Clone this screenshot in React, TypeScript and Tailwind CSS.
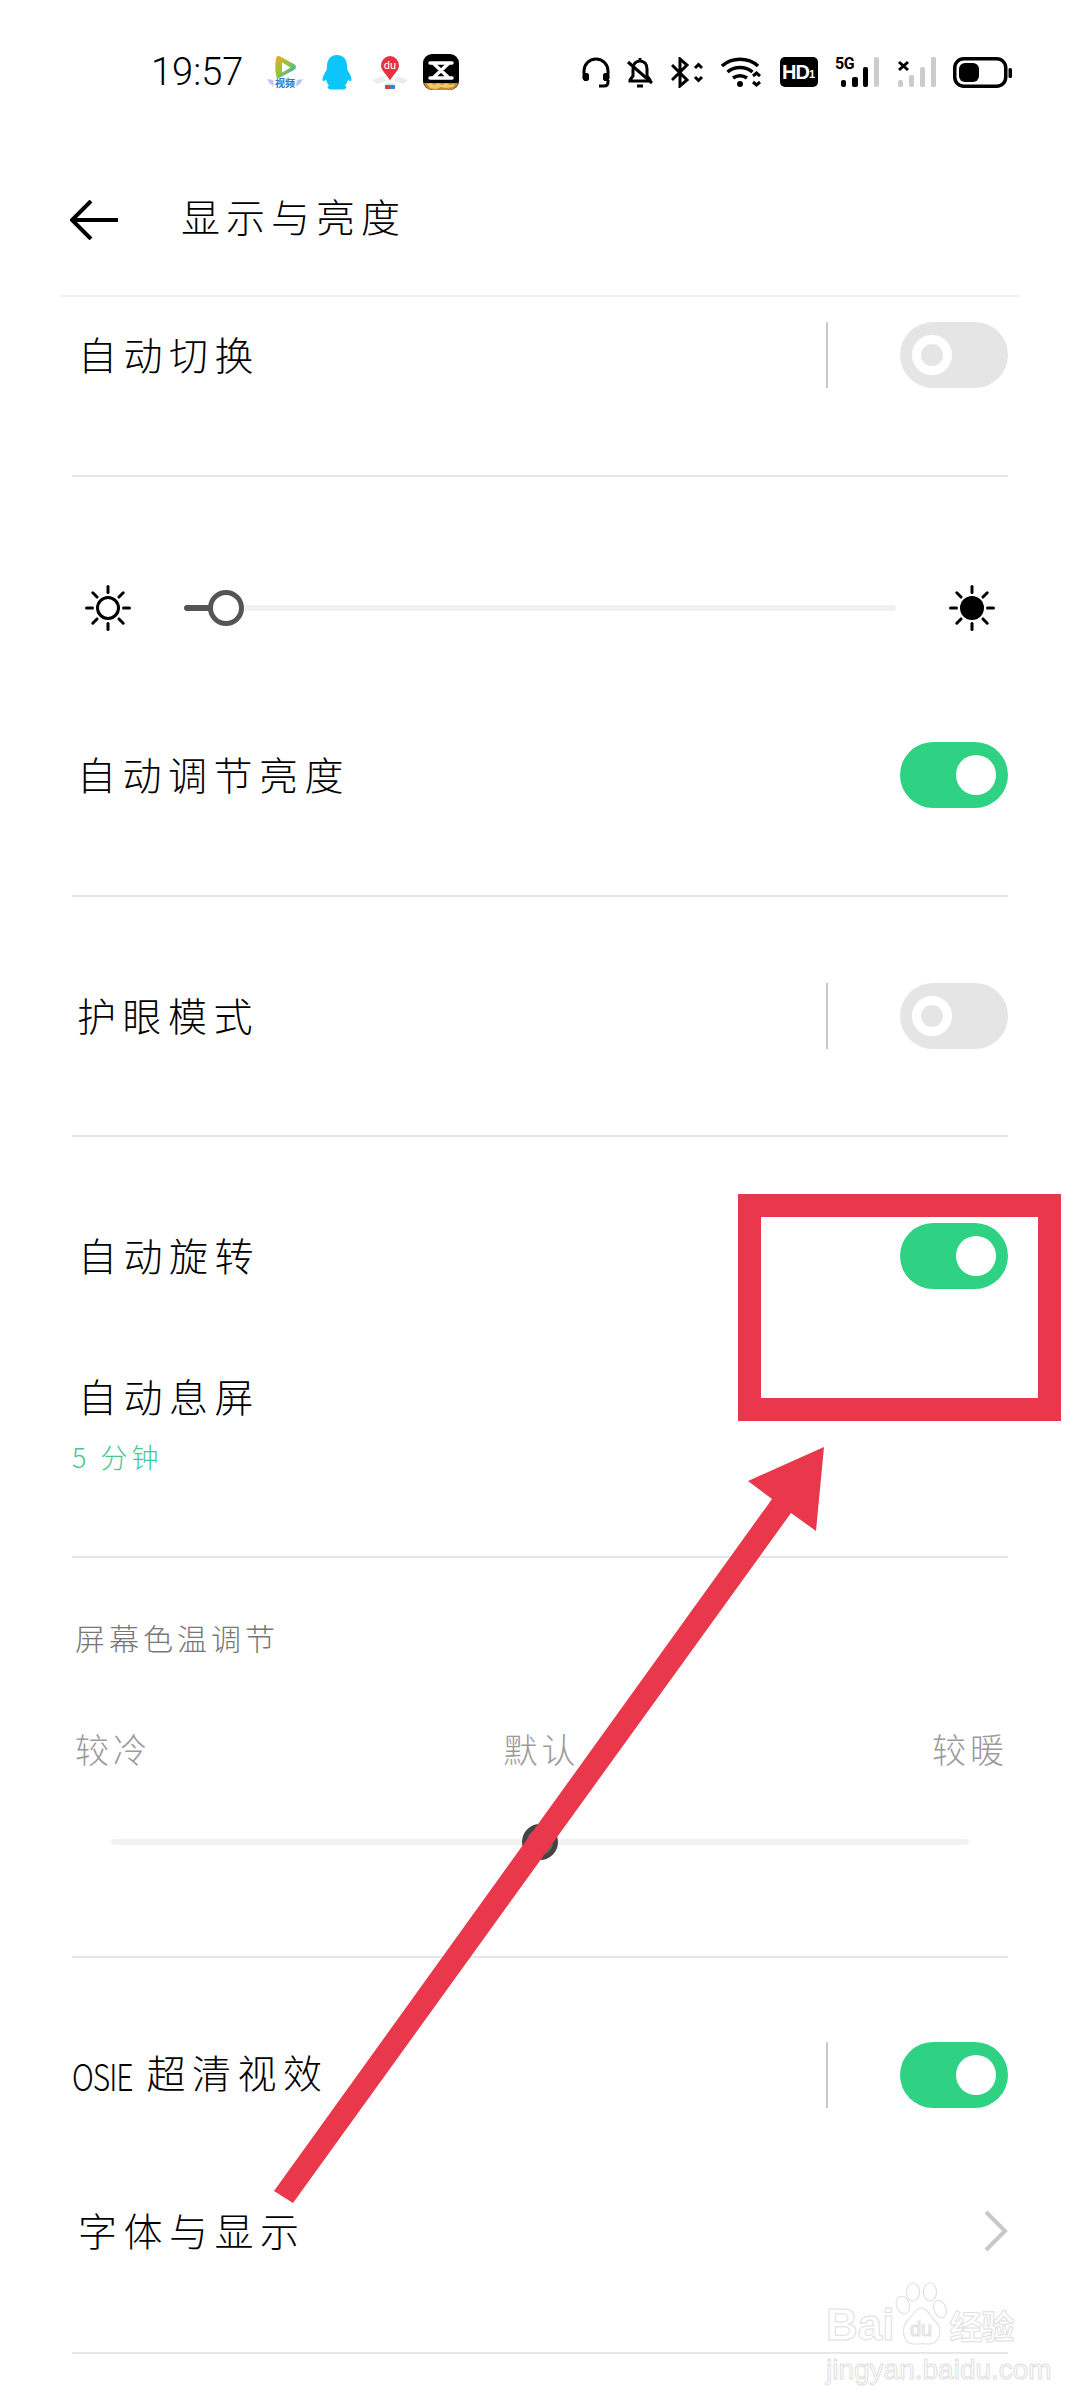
import type { ReactNode } from "react";

const labelClass = "font-['Noto_Sans_CJK_SC','Noto_Sans',sans-serif] text-[39px] leading-[56px] font-light tracking-[6.5px] text-black pb-[5px]";

function Toggle({ on }: { on: boolean }) {
  if (on) {
    return (
      <div className="flex h-[66px] w-[108px] items-center justify-end rounded-full bg-[#2fd283] pr-[12px]">
        <div className="size-[40px] rounded-full bg-white"></div>
      </div>
    );
  }
  return (
    <div className="flex h-[66px] w-[108px] items-center rounded-full bg-[#e5e5e5] pl-[12px]">
      <div className="size-[40px] rounded-full border-[9px] border-white"></div>
    </div>
  );
}

function Row({ label, labelClassName = "ml-[5px]", right }: { label: ReactNode; labelClassName?: string; right?: ReactNode }) {
  return (
    <div className="flex h-[116px] items-center justify-between">
      <span className={`${labelClass} ${labelClassName}`}>{label}</span>
      {right}
    </div>
  );
}

function DividedToggle({ on }: { on: boolean }) {
  return (
    <div className="flex items-center gap-[72px]">
      <div className="h-[66px] w-[2px] bg-[#c8c8c8]"></div>
      <Toggle on={on} />
    </div>
  );
}

function Sun({ filled }: { filled?: boolean }) {
  const rays = [0, 45, 90, 135, 180, 225, 270, 315];
  return (
    <svg width="46" height="46" viewBox="0 0 46 46" className="shrink-0">
      {rays.map((r) => (
        <line key={r} x1="23" y1="1.5" x2="23" y2="7.5" stroke="#000" strokeWidth="3" strokeLinecap="round" transform={`rotate(${r} 23 23)`} />
      ))}
      {filled ? (
        <circle cx="23" cy="23" r="12" fill="#000" />
      ) : (
        <circle cx="23" cy="23" r="10.5" fill="none" stroke="#000" strokeWidth="3" />
      )}
    </svg>
  );
}

function TencentVideo() {
  return (
    <svg width="36" height="36" viewBox="0 0 36 36">
      <defs>
        <linearGradient id="tv" x1="0" y1="0" x2="1" y2="1">
          <stop offset="0" stopColor="#f6a623" />
          <stop offset="0.5" stopColor="#8ac640" />
          <stop offset="1" stopColor="#1ea7e8" />
        </linearGradient>
      </defs>
      <path d="M9 5c0-2.500 2-3.500 4-2.500l14 7.500c2.500 1.500 2.500 4.500 0 6l-14 7.500c-2 1-4 0-4-2.500-1-5-1-11 0-16z" fill="url(#tv)" />
      <path d="M15 8.500l8.500 5-8.500 5z" fill="#fff" />
      <path d="M0 25l6 1 1 6-4-2zM36 25l-6 1-1 6 4-2z" fill="#b7c9ef" />
      <text x="18" y="33" textAnchor="middle" fontSize="10" fontWeight="700" fill="#2f6fd6" fontFamily="Noto Sans CJK SC, sans-serif">视频</text>
    </svg>
  );
}

function QQ() {
  return (
    <svg width="30" height="36" viewBox="0 0 30 36">
      <path d="M15 1c7 0 10 5 10 11 0 2 0 3 1 5 2 3 3.500 6 3.500 8.500 0 2-1.500 2-3.500 0-.5 3-2 5-3 6 2 1 2 3-1 4H8c-3-1-3-3-1-4-1-1-2.500-3-3-6-2 2-3.500 2-3.500 0 0-2.500 1.500-5.500 3.500-8.500 1-2 1-3 1-5C5 6 8 1 15 1z" fill="#0cc5fb" />
    </svg>
  );
}

function DuMap() {
  return (
    <svg width="36" height="36" viewBox="0 0 36 36">
      <path d="M0 26l11-4 3 5-9 3zM36 26l-11-4-3 5 9 3z" fill="#ececec" />
      <path d="M18 2a9.500 9.500 0 0 1 9 9.500c0 5-5 8-9 15-4-7-9-10-9-15A9.500 9.500 0 0 1 18 2z" fill="#e8323c" />
      <path d="M14.500 29h3.500v6h-5zM18 29h3.500l1.500 6h-5z" fill="#dfe6f2" />
      <rect x="13" y="31" width="5" height="4" fill="#d4414a" />
      <rect x="18" y="31" width="5" height="4" fill="#3f7fd6" />
      <text x="18" y="15" textAnchor="middle" fontSize="11" fill="#fff" fontFamily="Roboto, sans-serif">du</text>
    </svg>
  );
}

function CapCut() {
  return (
    <svg width="36" height="36" viewBox="0 0 36 36">
      <rect width="36" height="36" rx="9" fill="#000" />
      <path d="M1 29h34c-1 4-4 7-8 7H9c-4 0-7-3-8-7z" fill="#c98a2b" />
      <path d="M4 30l4-1 3 2 4-2 4 2 4-2 4 2 5-1-2 3-8 1-4-1-5 2-6-1z" fill="#f1c76a" />
      <path d="M7 9h22M7 24h22M10 9l16 15M26 9L10 24" stroke="#fff" strokeWidth="3.500" strokeLinecap="round" fill="none" />
    </svg>
  );
}

function Headset() {
  return (
    <svg width="28" height="31" viewBox="0 0 28 31" fill="none" stroke="#000" strokeWidth="3">
      <path d="M2 22V14a12 12 0 0 1 24 0v8" />
      <rect x="1.500" y="16.500" width="5" height="7" rx="1.500" fill="#000" strokeWidth="1" />
      <rect x="21.500" y="16.500" width="5" height="7" rx="1.500" fill="#000" strokeWidth="1" />
      <path d="M26 23v2c0 3-2 4-4 4h-5" />
    </svg>
  );
}

function BellOff() {
  return (
    <svg width="26" height="31" viewBox="0 0 26 31" fill="none" stroke="#000" strokeWidth="3">
      <path d="M13 1v3M6 12c0-5 3-8 7-8s7 3 7 8v7l3 4v1H3v-1l3-4z" />
      <path d="M1 5l24 21" />
      <path d="M10 29h6" />
    </svg>
  );
}

function Bluetooth() {
  return (
    <svg width="33" height="31" viewBox="0 0 33 31" fill="none" stroke="#000" strokeWidth="3">
      <path d="M1 8l15 15-7 6V2l7 6L1 23" />
      <path d="M24 11l3.500-3.500L31 11M24 20l3.500 3.500L31 20" />
    </svg>
  );
}

function Wifi() {
  return (
    <svg width="41" height="31" viewBox="0 0 41 31" fill="none" stroke="#000" strokeWidth="3.500">
      <path d="M1 9c10-9 26-9 36 0M6.500 15c7-6 18-6 25 0M12 21c4-3 10-3 14 0" />
      <circle cx="19" cy="27" r="3" fill="#000" stroke="none" />
      <path d="M32 19l3.500-3 3.500 3M32 25l3.500 3 3.500-3" strokeWidth="3" />
    </svg>
  );
}

function HdBadge() {
  return (
    <div className="flex h-[30px] w-[38px] items-center justify-center rounded-[5px] bg-black font-['Liberation_Sans',sans-serif] font-bold text-white">
      <span className="text-[20px] leading-[24px] tracking-[-1px]">HD</span>
      <span className="mt-[4px] text-[11px] leading-[20px]">1</span>
    </div>
  );
}

function Signal5G() {
  return (
    <div className="relative h-[31px] w-[45px]">
      <svg width="45" height="31" viewBox="0 0 45 31">
        <rect x="6" y="23" width="5" height="7" rx="2" fill="#000" />
        <rect x="17" y="20" width="6" height="10" rx="2" fill="#000" />
        <rect x="28" y="10" width="5" height="20" rx="2" fill="#000" />
        <rect x="39" y="0" width="5" height="30" rx="2" fill="#ccc" />
      </svg>
      <span className="absolute left-0 top-[-3px] font-['Roboto',sans-serif] text-[16px] leading-[20px] font-bold tracking-[-0.5px] text-black">5G</span>
    </div>
  );
}

function SignalNone() {
  return (
    <svg width="38" height="31" viewBox="0 0 38 31">
      <path d="M1 5l9 8M10 5l-9 8" stroke="#000" strokeWidth="3" />
      <rect x="0" y="23" width="5" height="7" rx="2" fill="#ccc" />
      <rect x="11" y="18" width="5" height="12" rx="2" fill="#ccc" />
      <rect x="22" y="10" width="5" height="20" rx="2" fill="#ccc" />
      <rect x="33" y="0" width="5" height="30" rx="2" fill="#ccc" />
    </svg>
  );
}

function Battery() {
  return (
    <svg width="59" height="31" viewBox="0 0 59 31">
      <rect x="1.750" y="1.750" width="51" height="27.500" rx="9" fill="none" stroke="#000" strokeWidth="3.500" />
      <rect x="6" y="6" width="20" height="19" rx="6" fill="#000" />
      <rect x="55.500" y="11" width="3.500" height="10" rx="1.500" fill="#000" />
    </svg>
  );
}

function BaiduWatermark() {
  const outline = "font-['Liberation_Sans',sans-serif] text-transparent [-webkit-text-stroke:1px_#e0e0e0]";
  return (
    <div className="absolute left-[826px] top-[2282px] flex w-[200px] flex-col">
      <div className="flex h-[66px] items-end">
        <span className={`${outline} text-[44px] leading-[46px] font-bold`}>Bai</span>
        <svg width="56" height="66" viewBox="0 0 56 66" fill="#fff" stroke="#e2e2e2" strokeWidth="1.200" className="-ml-[1px] shrink-0">
          <ellipse cx="10" cy="23" rx="6.500" ry="9" transform="rotate(-20 10 23)" />
          <ellipse cx="20" cy="10" rx="6.500" ry="9" />
          <ellipse cx="37" cy="10" rx="6.500" ry="9" />
          <ellipse cx="47" cy="27" rx="6" ry="9" transform="rotate(-20 47 27)" />
          <path d="M28 26c-6 0-8 8-14 13-6 6-5 24 8 23 4 0 8-1 12 0 12 1 17-14 9-22-6-5-8-14-15-14z" />
          <text x="28" y="54" textAnchor="middle" fontSize="20" fontFamily="Liberation Sans, sans-serif" fill="none">du</text>
        </svg>
        <span className="font-['Noto_Sans_CJK_SC',sans-serif] text-[33px] leading-[46px] font-bold tracking-[-1px] text-transparent [-webkit-text-stroke:1px_#e0e0e0]">经验</span>
      </div>
      <span className={`${outline} mt-[7px] whitespace-nowrap text-[28px] leading-[30px]`}>jingyan.baidu.com</span>
    </div>
  );
}

export default function App() {
  return (
    <div className="relative h-[2400px] w-[1080px] overflow-hidden bg-white">
      {/* Status bar */}
      <div className="flex h-[144px] items-center pl-[151px] pr-[68px]">
        <span className="font-['Roboto',sans-serif] text-[38px] font-light text-black">19:57</span>
        <div className="ml-[24px] flex items-center">
          <TencentVideo />
          <div className="ml-[19px]">
            <QQ />
          </div>
          <div className="ml-[20px]">
            <DuMap />
          </div>
          <div className="ml-[15px]">
            <CapCut />
          </div>
        </div>
        <div className="ml-auto flex items-center gap-[17.5px]">
          <Headset />
          <BellOff />
          <Bluetooth />
          <Wifi />
          <HdBadge />
          <Signal5G />
          <SignalNone />
          <Battery />
        </div>
      </div>

      {/* Header */}
      <div className="mx-[60px] flex h-[153px] items-center gap-[63px] border-b-2 border-[#f0f0f0] pl-[10px]">
        <svg width="48" height="40" viewBox="0 0 48 40" fill="none" stroke="#000" strokeWidth="4">
          <path d="M48 20H2M21 1L2 20l19 19" />
        </svg>
        <span className="pb-[9px] font-['Noto_Sans_CJK_SC','Noto_Sans',sans-serif] text-[39px] leading-[56px] font-light tracking-[6px] text-black">显示与亮度</span>
      </div>

      <div className="px-[72px]">
        <div className="border-b-2 border-[#e6e6e6] pb-[62px]">
          <Row label="自动切换" labelClassName="ml-[6px]" right={<DividedToggle on={false} />} />
        </div>

        {/* Brightness */}
        <div className="border-b-2 border-[#e6e6e6] pb-[62px] pt-[108px]">
          <div className="flex h-[46px] items-center gap-[53px] px-[13px]">
            <Sun />
            <div className="relative h-[6px] flex-1 rounded-full bg-[#f1f1f1]">
              <div className="h-[6px] w-[42px] rounded-full bg-[#555555]"></div>
              <div className="absolute left-[24px] top-[-15px] size-[36px] rounded-full border-[5px] border-[#555555] bg-white"></div>
            </div>
            <Sun filled />
          </div>
          <div className="mt-[86px]">
            <Row label="自动调节亮度" right={<Toggle on />} />
          </div>
        </div>

        <div className="border-b-2 border-[#e6e6e6] py-[61px]">
          <Row label="护眼模式" labelClassName="ml-[5px]" right={<DividedToggle on={false} />} />
        </div>

        <div className="border-b-2 border-[#e6e6e6] pb-[79px] pt-[61px]">
          <Row label="自动旋转" labelClassName="ml-[6px]" right={<Toggle on />} />
          <div className={`${labelClass} ml-[6px] mt-[53px]`}>自动息屏</div>
          <div className="mt-[9px] font-['Noto_Sans_CJK_SC',sans-serif] text-[27px] leading-[40px] font-light tracking-[4px] text-[#45c78f]">5 分钟</div>
        </div>

        {/* Colour temperature */}
        <div className="border-b-2 border-[#e6e6e6] pb-[96px] pt-[59px]">
          <div className="ml-[3px] font-['Noto_Sans_CJK_SC',sans-serif] text-[30px] leading-[40px] font-light tracking-[4px] text-[#777777]">屏幕色温调节</div>
          <div className="mt-[72px] flex justify-between pl-[3px] font-['Noto_Sans_CJK_SC',sans-serif] text-[34px] leading-[40px] font-light tracking-[4px] text-[#9a9a9a]">
            <span>较冷</span>
            <span>默认</span>
            <span>较暖</span>
          </div>
          <div className="mx-[39px] mt-[55px] flex h-[36px] items-center">
            <div className="relative h-[6px] w-full rounded-full bg-[#f1f1f1]">
              <div className="absolute left-[411px] top-[-15px] size-[36px] rounded-full border-[5px] border-[#444444] bg-[#666666]"></div>
            </div>
          </div>
        </div>

        <div className="border-b-2 border-[#e6e6e6] pb-[63px] pt-[59px]">
          <Row
            label={
              <>
                <span className="mr-[14px] inline-block scale-y-125 text-[30px] tracking-[-1px]">OSIE</span>超清视效
              </>
            }
            labelClassName="ml-0"
            right={<DividedToggle on />}
          />
          <div className="mt-[40px]">
            <Row
              label="字体与显示"
              labelClassName="ml-[6px]"
              right={
                <svg width="24" height="42" viewBox="0 0 24 42" fill="none" stroke="#c8c8c8" strokeWidth="4">
                  <path d="M2 2l19 19L2 40" />
                </svg>
              }
            />
          </div>
        </div>
      </div>

      <BaiduWatermark />

      {/* Red annotation */}
      <div className="absolute left-[738px] top-[1194px] h-[227px] w-[323px] border-[23px] border-[#e9374b]"></div>
      <svg className="absolute left-0 top-0" width="1080" height="2400" viewBox="0 0 1080 2400">
        <polygon points="824,1447 816,1531 791,1513 293,2203 274,2191 772,1499 748,1481" fill="#e9374b" />
      </svg>
    </div>
  );
}
